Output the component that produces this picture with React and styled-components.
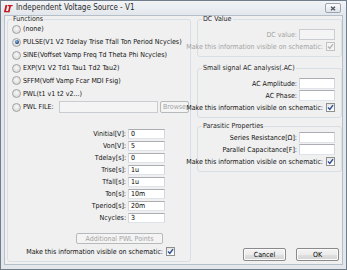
import React from "react";
import styled, { createGlobalStyle } from "styled-components";

const FONT = `"Liberation Sans Narrow", "DejaVu Sans Condensed", "Liberation Sans", Arial, sans-serif`;

const GlobalStyle = createGlobalStyle`
  html, body {
    margin: 0;
    padding: 0;
    background: #ffffff;
  }
  body {
    font-family: ${FONT};
  }
`;

const Window = styled("div")`
  width: 347px;
  height: 270px;
  box-sizing: border-box;
  border: 1px solid #6f7c8a;
  background: #e3e7ec;
  display: flex;
  flex-direction: column;
  font-family: ${FONT};
  font-size: 7px;
  color: #111;
`;

const TitleBar = styled("div")`
  height: 14px;
  display: flex;
  align-items: center;
  gap: 3px;
  padding: 0 5px 0 2px;
  background: linear-gradient(#f1f3f6, #e3e7ec);
`;

const TitleText = styled("span")`
  flex: 1;
  font-size: 8px;
  line-height: 1;
  color: #2b2b2b;
`;

const CloseButton = styled("div")`
  width: 14px;
  height: 8px;
  border: 1px solid #9ba5b0;
  border-radius: 2px;
  background: linear-gradient(#fafbfc, #dfe3e8);
  display: flex;
  align-items: center;
  justify-content: center;
`;

const Client = styled("div")`
  flex: 1;
  margin: 0 3px 4px 3px;
  border: 1px solid #b5bfc9;
  background: #f0f0f0;
  display: flex;
  gap: 6px;
  padding-left: 2px;
`;

const Group = styled("fieldset")`
  box-sizing: border-box;
  margin: ${(p) => p.$mt || 0}px 0 0 0;
  padding: ${(p) => p.$pt ?? 3}px ${(p) => p.$pr ?? 6}px ${(p) => p.$pb ?? 5}px 4px;
  border: 1px solid #d5dfe5;
  border-radius: 3px;
  min-width: 0;
  display: flex;
  flex-direction: column;
`;

const FunctionsGroup = styled(Group)`
  width: 184px;
  height: 246px;
`;

const Legend = styled("legend")`
  padding: 0 1px;
  line-height: 7px;
  color: #1e1e1e;
`;

const RadioRow = styled("div")`
  height: ${(p) => p.$h || 13}px;
  display: flex;
  align-items: center;
  gap: 2px;
  white-space: nowrap;
`;

const RadioDot = styled("span")`
  flex: none;
  width: 9px;
  height: 9px;
  box-sizing: border-box;
  border-radius: 50%;
  border: 1px solid #a2a2a2;
  background: radial-gradient(circle at 50% 40%, #f8f8f8, #d2d2d2);
  display: flex;
  align-items: center;
  justify-content: center;
  &::after {
    content: "";
    display: ${(p) => (p.$on ? "block" : "none")};
    width: 4px;
    height: 4px;
    border-radius: 50%;
    background: radial-gradient(circle at 40% 35%, #86b8ea, #143f78 70%);
  }
`;

const FileLabel = styled("span")`
  flex: none;
  width: 34px;
`;

const TextBox = styled("input")`
  box-sizing: border-box;
  flex: none;
  width: ${(p) => p.$w || 37}px;
  height: ${(p) => p.$h || 10}px;
  margin: 0;
  padding: 0 2px;
  font: inherit;
  color: #000;
  background: #fff;
  border: 1px solid;
  border-color: #abadb3 #d4d7de #dfe3ea #d4d7de;
  outline: none;
  &:disabled {
    background: #f4f4f4;
    border-color: #c9cdd2;
  }
`;

const Button = styled("button")`
  box-sizing: border-box;
  flex: none;
  width: ${(p) => p.$w}px;
  height: ${(p) => p.$h || 11}px;
  margin: ${(p) => p.$mt || 0}px 0 0 ${(p) => p.$ml || 0}px;
  padding: 0;
  overflow: hidden;
  font: inherit;
  color: #000;
  border: 1px solid #8a8a8a;
  border-radius: 2px;
  background: linear-gradient(#f4f4f4 0%, #ececec 50%, #e0e0e0 51%, #d4d4d4 100%);
  box-shadow: inset 0 0 0 1px #fbfbfb;
  &:disabled {
    color: #a3a3a3;
    border-color: #b6babd;
    background: #f4f4f4;
    box-shadow: none;
  }
`;

const ParamGrid = styled("div")`
  margin: 15px 0 0 48px;
  width: 105px;
  display: grid;
  grid-template-columns: 1fr 37px;
  grid-auto-rows: 10px;
  column-gap: 2px;
  row-gap: 2px;
`;

const ParamLabel = styled("span")`
  text-align: right;
  line-height: 10px;
  white-space: nowrap;
`;

const CheckRow = styled("div")`
  height: 9px;
  margin-top: ${(p) => p.$mt ?? 2}px;
  padding-right: ${(p) => p.$pr || 0}px;
  display: flex;
  justify-content: flex-end;
  align-items: center;
  gap: 3px;
  white-space: nowrap;
  color: ${(p) => (p.$disabled ? "#a3a3a3" : "inherit")};
`;

const CheckBoxSquare = styled("span")`
  flex: none;
  width: 9px;
  height: 9px;
  box-sizing: border-box;
  border: 1px solid ${(p) => (p.$disabled ? "#c2c2c2" : "#8e8f8f")};
  background: ${(p) => (p.$disabled ? "#f4f4f4" : "linear-gradient(#e6e6e6, #ffffff)")};
  display: flex;
  align-items: center;
  justify-content: center;
`;

const FieldRow = styled("div")`
  height: 11px;
  margin-top: ${(p) => p.$mt ?? 1}px;
  display: flex;
  justify-content: flex-end;
  align-items: center;
  gap: 2px;
  white-space: nowrap;
  color: ${(p) => (p.$disabled ? "#a3a3a3" : "inherit")};
`;

const RightColumn = styled("div")`
  width: 145px;
  display: flex;
  flex-direction: column;
`;

const ButtonRow = styled("div")`
  margin-top: auto;
  margin-bottom: 3px;
  padding-right: 3px;
  display: flex;
  justify-content: flex-end;
  gap: 10px;
`;

const Logo = () => (
  <svg width="10" height="9" viewBox="0 0 10 9">
    <path d="M2.5 1 H4.3 L3 7 H6 L5.7 8.3 H0.9 Z" fill="#c4161c" />
    <path d="M4.8 1 H9.8 L9.5 2.3 H7.9 L6.6 8.3 H4.9 L6.2 2.3 H4.5 Z" fill="#c4161c" />
  </svg>
);

const CloseGlyph = () => (
  <svg width="6" height="5" viewBox="0 0 6 5">
    <path d="M1 0.8 L5 4.2 M5 0.8 L1 4.2" stroke="#4a5360" strokeWidth="1.3" fill="none" />
  </svg>
);

const Check = ({ checked, disabled }) => (
  <CheckBoxSquare $disabled={disabled}>
    {checked && (
      <svg width="7" height="7" viewBox="0 0 7 7">
        <path
          d="M1 3.6 L2.8 5.4 L6 1.2"
          fill="none"
          stroke={disabled ? "#b4b4b4" : "#2d4c9c"}
          strokeWidth="1.4"
        />
      </svg>
    )}
  </CheckBoxSquare>
);

const functions = [
  "(none)",
  "PULSE(V1 V2 Tdelay Trise Tfall Ton Period Ncycles)",
  "SINE(Voffset Vamp Freq Td Theta Phi Ncycles)",
  "EXP(V1 V2 Td1 Tau1 Td2 Tau2)",
  "SFFM(Voff Vamp Fcar MDI Fsig)",
  "PWL(t1 v1 t2 v2...)",
];

const params = [
  ["Vinitial[V]:", "0"],
  ["Von[V]:", "5"],
  ["Tdelay[s]:", "0"],
  ["Trise[s]:", "1u"],
  ["Tfall[s]:", "1u"],
  ["Ton[s]:", "10m"],
  ["Tperiod[s]:", "20m"],
  ["Ncycles:", "3"],
];

const VISIBLE = "Make this information visible on schematic:";

const App = () => {
  return (
    <>
      <GlobalStyle />
      <Window>
        <TitleBar>
          <Logo />
          <TitleText>Independent Voltage Source - V1</TitleText>
          <CloseButton>
            <CloseGlyph />
          </CloseButton>
        </TitleBar>
        <Client>
          <FunctionsGroup $pr={1} $pt={0}>
            <Legend>Functions</Legend>
            {functions.map((f, i) => (
              <RadioRow key={f}>
                <RadioDot $on={i === 1} />
                <span>{f}</span>
              </RadioRow>
            ))}
            <RadioRow $h={14}>
              <RadioDot />
              <FileLabel>PWL FILE:</FileLabel>
              <TextBox disabled $w={99} $h={12} />
              <Button disabled $w={29} $h={12}>
                Browse
              </Button>
            </RadioRow>
            <ParamGrid>
              {params.map(([label, value]) => (
                <React.Fragment key={label}>
                  <ParamLabel>{label}</ParamLabel>
                  <TextBox defaultValue={value} />
                </React.Fragment>
              ))}
            </ParamGrid>
            <Button disabled $w={87} $ml={64} $mt={10}>
              Additional PWL Points
            </Button>
            <CheckRow $mt={3} $pr={14}>
              <span>{VISIBLE}</span>
              <Check checked />
            </CheckRow>
          </FunctionsGroup>

          <RightColumn>
            <Group>
              <Legend>DC Value</Legend>
              <FieldRow $disabled $mt={3}>
                <span>DC value:</span>
                <TextBox disabled $w={36} $h={11} />
              </FieldRow>
              <CheckRow $disabled>
                <span>{VISIBLE}</span>
                <Check checked disabled />
              </CheckRow>
            </Group>

            <Group $mt={8}>
              <Legend>Small signal AC analysis(.AC)</Legend>
              <FieldRow $mt={3}>
                <span>AC Amplitude:</span>
                <TextBox $w={36} $h={11} />
              </FieldRow>
              <FieldRow>
                <span>AC Phase:</span>
                <TextBox $w={36} $h={11} />
              </FieldRow>
              <CheckRow>
                <span>{VISIBLE}</span>
                <Check checked />
              </CheckRow>
            </Group>

            <Group $mt={5} $pt={1}>
              <Legend>Parasitic Properties</Legend>
              <FieldRow $mt={1}>
                <span>Series Resistance[Ω]:</span>
                <TextBox $w={36} $h={11} />
              </FieldRow>
              <FieldRow>
                <span>Parallel Capacitance[F]:</span>
                <TextBox $w={36} $h={11} />
              </FieldRow>
              <CheckRow>
                <span>{VISIBLE}</span>
                <Check checked />
              </CheckRow>
            </Group>

            <ButtonRow>
              <Button $w={43} $h={13}>
                Cancel
              </Button>
              <Button $w={43} $h={13}>
                OK
              </Button>
            </ButtonRow>
          </RightColumn>
        </Client>
      </Window>
    </>
  );
};

export default App;
